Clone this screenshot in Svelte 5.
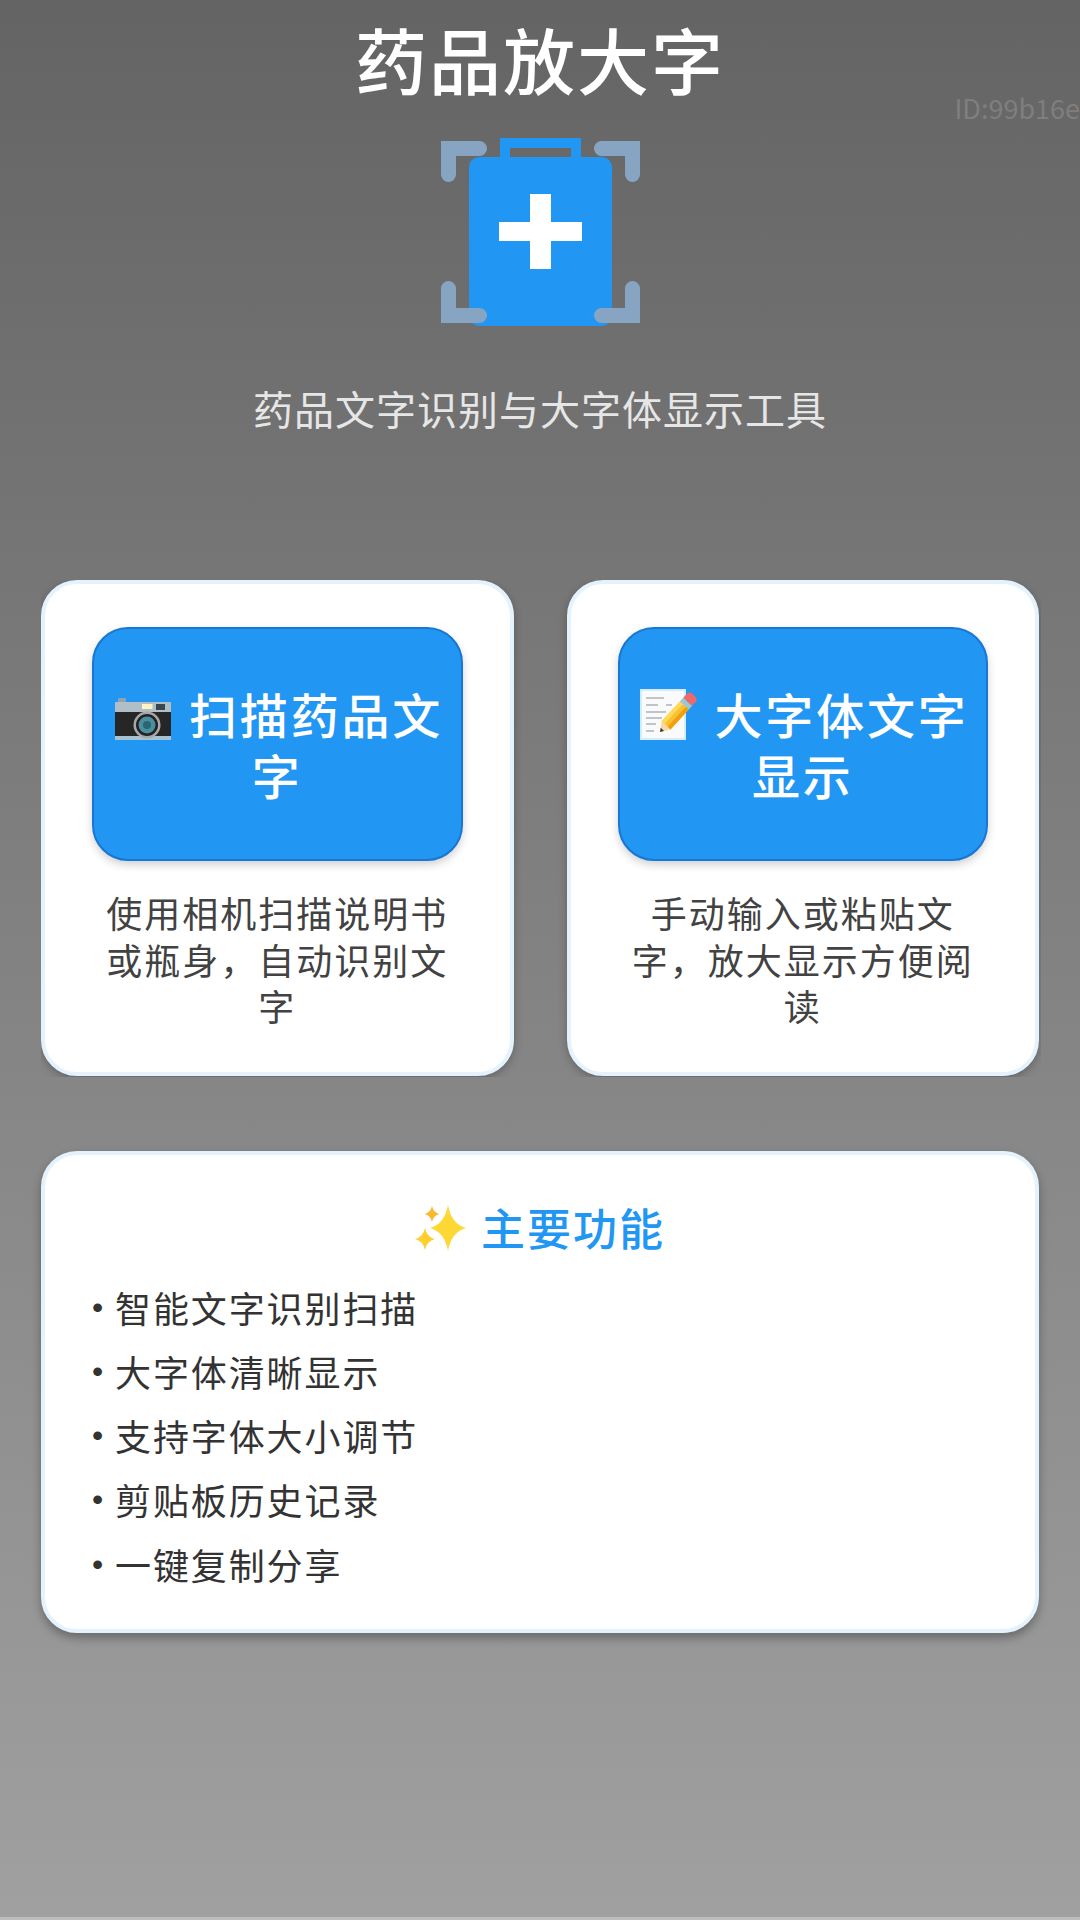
<script>
	const features = ['智能文字识别扫描', '大字体清晰显示', '支持字体大小调节', '剪贴板历史记录', '一键复制分享'];

	// four point star used by the sparkle emoji
	function star(cx, cy, rx, ry) {
		const k = 0.18;
		return `M${cx} ${cy - ry}Q${cx + rx * k} ${cy - ry * k} ${cx + rx} ${cy}Q${cx + rx * k} ${cy + ry * k} ${cx} ${cy + ry}Q${cx - rx * k} ${cy + ry * k} ${cx - rx} ${cy}Q${cx - rx * k} ${cy - ry * k} ${cx} ${cy - ry}Z`;
	}
</script>

<div class="page">
	<span class="device-id">ID:99b16e</span>

	<header class="hero">
		<h1 class="title">药品放大字</h1>
		<svg class="logo" viewBox="440 138 199 188" aria-hidden="true">
			<path d="M504 157V143H575V157" fill="none" stroke="#2196f3" stroke-width="10" />
			<rect x="468" y="157" width="143" height="169" rx="10" fill="#2196f3" />
			<rect x="529" y="194" width="21" height="75" fill="#fff" />
			<rect x="498" y="222" width="83" height="19" fill="#fff" />
			<g fill="none" stroke="#87a5c2" stroke-width="15" stroke-linecap="round">
				<path d="M447.5 174.500V148.500H478.500" />
				<path d="M631.500 174.500V148.500H600.500" />
				<path d="M447.500 288.500V315.500H478.500" />
				<path d="M631.500 288.500V315.500H600.500" />
			</g>
		</svg>
		<p class="subtitle">药品文字识别与大字体显示工具</p>
	</header>

	<section class="actions">
		<div class="card">
			<button class="action">
				<svg class="emoji" viewBox="0 0 58 58" aria-hidden="true">
					<rect x="4" y="13" width="8" height="6" rx="1.500" fill="#90a4ae" />
					<rect x="1" y="17" width="56" height="11" rx="1" fill="#b0bec5" />
					<rect x="1" y="27" width="56" height="24" fill="#262626" />
					<rect x="1" y="51" width="56" height="4" fill="#a5c2d3" />
					<rect x="28" y="19" width="10.500" height="5" fill="#fff3c4" />
					<rect x="42" y="19" width="9" height="6" fill="#37474f" />
					<circle cx="33" cy="40" r="13.500" fill="#a8a8a8" />
					<circle cx="33" cy="40" r="11" fill="#222" />
					<circle cx="33" cy="40" r="8.500" fill="#4a8f9e" />
					<circle cx="33" cy="40" r="4" fill="#2c6472" />
				</svg>
				扫描药品文字
			</button>
			<p class="desc">使用相机扫描说明书或瓶身，自动识别文字</p>
		</div>

		<div class="card">
			<button class="action">
				<svg class="emoji" viewBox="0 0 58 58" aria-hidden="true">
					<rect x="0" y="4" width="46" height="51" fill="#d7ecfa" />
					<rect x="2" y="6" width="42" height="47" fill="#fafafa" />
					<g fill="none" stroke="#a9b4ba" stroke-width="1.500">
						<path d="M6 13H24" />
						<path d="M6 20H18M26 20H32" />
						<path d="M6 27H26" />
						<path d="M6 33H22" />
						<path d="M6 39H16" />
						<path d="M6 46H14" />
					</g>
					<g transform="translate(20 47) rotate(-47.500)">
						<path d="M0 0L9 -6V6Z" fill="#f5d9a8" />
						<path d="M0 0L3.500 -2.300V2.300Z" fill="#3a3a3a" />
						<rect x="9" y="-6" width="27" height="12" fill="#fbc02d" />
						<rect x="9" y="-6" width="27" height="4" fill="#ffd95a" />
						<rect x="9" y="2" width="27" height="4" fill="#ef9f0f" />
						<rect x="36" y="-6" width="5" height="12" fill="#9fc5cf" />
						<path d="M41 -6H46Q50 -6 50 -2V2Q50 6 46 6H41Z" fill="#ec6a6a" />
					</g>
				</svg>
				大字体文字显示
			</button>
			<p class="desc">手动输入或粘贴文字，放大显示方便阅读</p>
		</div>
	</section>

	<section class="features">
		<h2 class="features-title">
			<svg class="sparkles" viewBox="0 0 52 48" aria-hidden="true">
				<path d={star(33, 23, 18, 23)} fill="#fdd835" />
				<path d={star(17, 9, 7.500, 8)} fill="#f9b92c" />
				<path d={star(10, 34, 10, 11)} fill="#fdd02f" />
			</svg>
			主要功能
		</h2>
		<ul class="feature-list">
			{#each features as item}
				<li><span class="dot">•</span>{item}</li>
			{/each}
		</ul>
	</section>

	<div class="bottom-edge"></div>
</div>

<style>
	:global(body) {
		margin: 0;
		font-family: 'Noto Sans CJK SC', 'Noto Sans', sans-serif;
	}

	.page {
		position: relative;
		box-sizing: border-box;
		height: 1920px;
		display: flex;
		flex-direction: column;
		background: linear-gradient(#646464, #a0a0a0);
		overflow: hidden;
	}

	.device-id {
		position: absolute;
		top: 90px;
		right: 0;
		font-size: 27px;
		line-height: 36px;
		color: rgba(255, 255, 255, 0.17);
	}

	/* header */
	.hero {
		display: flex;
		flex-direction: column;
		align-items: center;
		padding-top: 16px;
	}

	.title {
		margin: 0;
		font-size: 72px;
		line-height: 84px;
		font-weight: 500;
		letter-spacing: 2px;
		color: #fff;
	}

	.logo {
		display: block;
		width: 199px;
		height: 188px;
		margin-top: 38px;
	}

	.subtitle {
		margin: 54px 0 2px;
		font-size: 40px;
		line-height: 56px;
		letter-spacing: 1px;
		color: #e6e6e6;
	}

	/* two action cards, the row clips their shadows */
	.actions {
		display: grid;
		grid-template-columns: 1fr 1fr;
		gap: 53px;
		margin: 142px 39px 0 41px;
		padding: 0 2px 1px 0;
		overflow: hidden;
	}

	.card {
		padding: 43px 47px 43px;
		border: 4px solid #e3f2fd;
		border-radius: 36px;
		background: #fff;
		box-shadow: 0 3px 8px rgba(0, 0, 0, 0.25);
	}

	.action {
		display: block;
		box-sizing: border-box;
		width: 100%;
		padding: 54px 16px;
		border: 2px solid #1976d2;
		border-radius: 36px;
		background: #2196f3;
		box-shadow: 0 4px 8px rgba(0, 0, 0, 0.18);
		font-family: inherit;
		font-size: 48px;
		line-height: 61px;
		font-weight: 500;
		letter-spacing: 2.800px;
		text-align: center;
		color: #fff;
	}

	.emoji {
		display: inline-block;
		width: 58px;
		height: 58px;
		margin: 0 3px;
		vertical-align: -9px;
	}

	.desc {
		margin: 28px 0 0;
		font-size: 36px;
		line-height: 46.500px;
		letter-spacing: 2px;
		text-align: center;
		color: #424242;
	}

	/* feature list */
	.features {
		margin: 74px 41px 0;
		padding: 39px 47px 33px;
		border: 4px solid #e3f2fd;
		border-radius: 36px;
		background: #fff;
		box-shadow: 0 5px 10px rgba(0, 0, 0, 0.3);
	}

	.features-title {
		display: flex;
		align-items: center;
		justify-content: center;
		gap: 14px;
		margin: 0 0 15px;
		font-size: 44px;
		line-height: 66px;
		font-weight: 500;
		letter-spacing: 2px;
		color: #2196f3;
	}

	.sparkles {
		width: 52px;
		height: 48px;
		margin-top: 4px;
	}

	.feature-list {
		margin: 0;
		padding: 0;
		list-style: none;
		font-size: 36px;
		line-height: 64.300px;
		letter-spacing: 1.900px;
		color: #333;
	}

	.feature-list li {
		display: flex;
	}

	.dot {
		width: 23px;
		font-size: 32px;
		font-family: 'Liberation Sans', sans-serif;
		letter-spacing: 0;
	}

	.bottom-edge {
		height: 3px;
		margin-top: auto;
		background: #bdbdbd;
	}
</style>
